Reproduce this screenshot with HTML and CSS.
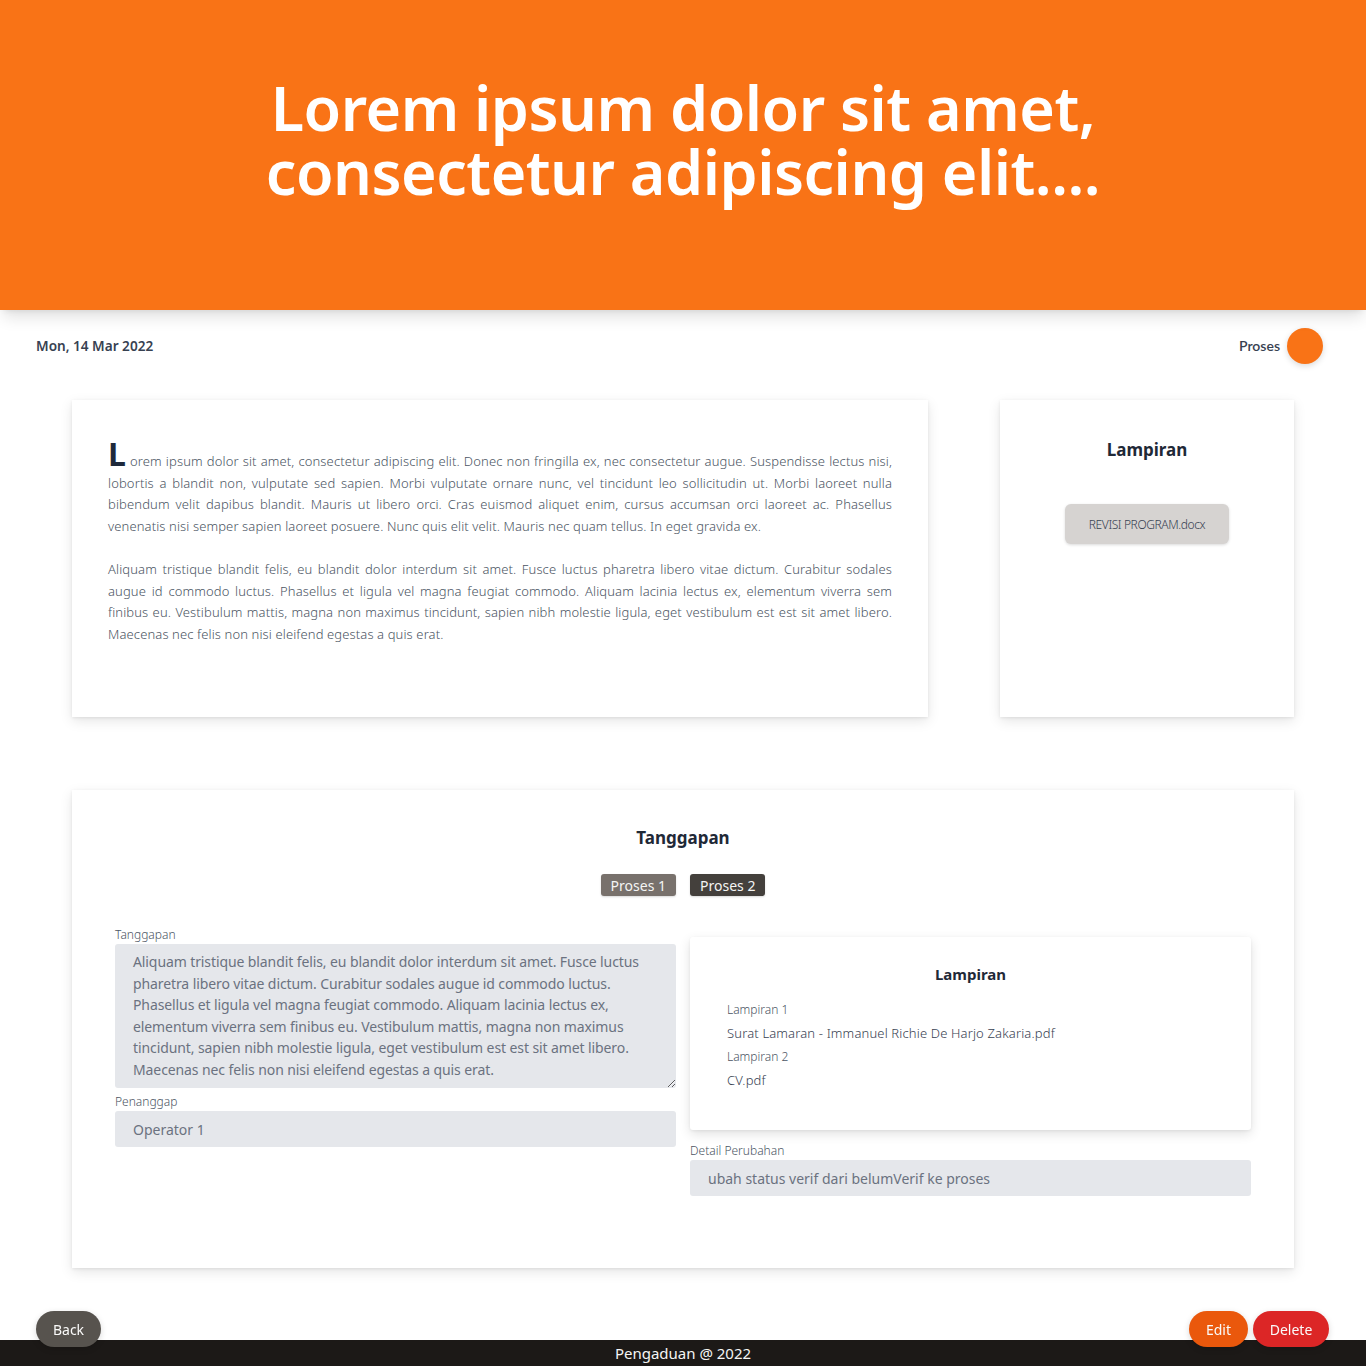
FILE: index.html
```html
<!DOCTYPE html>
<html lang="id">
<head>
<meta charset="utf-8">
<title>Pengaduan</title>
<link rel="stylesheet" href="styles.css">
</head>
<body>
<header class="hero">
  <h1 class="hero-title"><span class="hero-line">Lorem ipsum dolor sit amet,</span><span class="hero-line">consectetur adipiscing elit....</span></h1>
</header>

<div class="meta-row">
  <span class="date">Mon, 14 Mar 2022</span>
  <div class="status">
    <span class="status-text">Proses</span>
    <span class="status-dot"></span>
  </div>
</div>

<main class="content">
  <section class="top-grid">
    <article class="card body-card">
      <p class="body-text drop">Lorem ipsum dolor sit amet, consectetur adipiscing elit. Donec non fringilla ex, nec consectetur augue. Suspendisse lectus nisi, lobortis a blandit non, vulputate sed sapien. Morbi vulputate ornare nunc, vel tincidunt leo sollicitudin ut. Morbi laoreet nulla bibendum velit dapibus blandit. Mauris ut libero orci. Cras euismod aliquet enim, cursus accumsan orci laoreet ac. Phasellus venenatis nisi semper sapien laoreet posuere. Nunc quis elit velit. Mauris nec quam tellus. In eget gravida ex.</p>
      <p class="body-text">Aliquam tristique blandit felis, eu blandit dolor interdum sit amet. Fusce luctus pharetra libero vitae dictum. Curabitur sodales augue id commodo luctus. Phasellus et ligula vel magna feugiat commodo. Aliquam lacinia lectus ex, elementum viverra sem finibus eu. Vestibulum mattis, magna non maximus tincidunt, sapien nibh molestie ligula, eget vestibulum est est sit amet libero. Maecenas nec felis non nisi eleifend egestas a quis erat.</p>
    </article>
    <aside class="card attach-card">
      <h2 class="card-title">Lampiran</h2>
      <button class="file-btn">REVISI PROGRAM.docx</button>
    </aside>
  </section>

  <section class="card reply-card">
    <h2 class="card-title">Tanggapan</h2>
    <div class="tabs">
      <button class="tab tab-light">Proses 1</button>
      <button class="tab tab-dark">Proses 2</button>
    </div>
    <div class="reply-grid">
      <div class="col">
        <label class="field-label">Tanggapan</label>
        <textarea class="field field-area" readonly>Aliquam tristique blandit felis, eu blandit dolor interdum sit amet. Fusce luctus pharetra libero vitae dictum. Curabitur sodales augue id commodo luctus. Phasellus et ligula vel magna feugiat commodo. Aliquam lacinia lectus ex, elementum viverra sem finibus eu. Vestibulum mattis, magna non maximus tincidunt, sapien nibh molestie ligula, eget vestibulum est est sit amet libero. Maecenas nec felis non nisi eleifend egestas a quis erat.</textarea>
        <label class="field-label">Penanggap</label>
        <div class="field field-input">Operator 1</div>
      </div>
      <div class="col">
        <div class="sub-card">
          <h3 class="sub-title">Lampiran</h3>
          <div class="sub-label">Lampiran 1</div>
          <div class="sub-file">Surat Lamaran - Immanuel Richie De Harjo Zakaria.pdf</div>
          <div class="sub-label">Lampiran 2</div>
          <div class="sub-file">CV.pdf</div>
        </div>
        <label class="field-label">Detail Perubahan</label>
        <div class="field field-input">ubah status verif dari belumVerif ke proses</div>
      </div>
    </div>
  </section>
</main>

<div class="actions">
  <button class="pill pill-back">Back</button>
  <div class="actions-right">
    <button class="pill pill-edit">Edit</button>
    <button class="pill pill-delete">Delete</button>
  </div>
</div>

<footer class="footer">Pengaduan @ 2022</footer>
</body>
</html>
```

FILE: styles.css
```css
* { box-sizing: border-box; }
html, body { margin: 0; padding: 0; }
body {
  font-family: "Noto Sans", "Open Sans", sans-serif;
  background: #ffffff;
  color: #1f2937;
}
.hero {
  background: #f97316;
  height: 310px;
  display: flex;
  align-items: flex-start;
  justify-content: center;
  box-shadow: 0 10px 15px -3px rgba(0,0,0,0.12), 0 4px 6px -4px rgba(0,0,0,0.1);
  position: relative;
  z-index: 1;
}
.hero-title {
  margin: 76px 0 0 0;
  color: #ffffff;
  font-size: 61px;
  font-weight: 600;
  line-height: 64px;
  text-align: center;
  letter-spacing: -0.5px;
}
.hero-line { display: block; height: 64px; }
.meta-row {
  display: flex;
  justify-content: space-between;
  align-items: center;
  padding: 17px 43px 0 36px;
  height: 54px;
}
.date {
  font-size: 13.6px;
  font-weight: 600;
  color: #374151;
}
.status { display: flex; align-items: center; gap: 7px; }
.status-text { font-size: 14px; color: #374151; font-family: Lato, sans-serif; font-weight: 600; }
.status-dot {
  width: 36px; height: 36px; border-radius: 50%;
  background: #f97316;
  box-shadow: 0 2px 6px rgba(0,0,0,0.15);
}
.content { padding: 36px 72px 40px 72px; }
.card {
  background: #fff;
  box-shadow: 0 4px 12px rgba(0,0,0,0.10), 0 1px 3px rgba(0,0,0,0.08);
}
.top-grid {
  display: grid;
  grid-template-columns: 856px 294px;
  justify-content: space-between;
}
.body-card { height: 317px; padding: 43px 36px 0 36px; }
.body-text {
  margin: 0 0 22px 0;
  font-size: 13px;
  font-weight: 300;
  line-height: 21.5px;
  color: #4b5563;
  text-align: justify;
  letter-spacing: 0.12px;
}
.drop::first-letter {
  font-size: 32px;
  font-weight: 700;
  color: #1e293b;
  margin-right: 4px;
}
.attach-card {
  height: 317px;
  display: flex; flex-direction: column; align-items: center;
  padding-top: 38px;
}
.card-title {
  margin: 0;
  font-size: 17px;
  font-weight: 700;
  color: #1f2937;
}
.file-btn {
  margin-top: 43px;
  width: 164px; height: 40px;
  background: #d6d3d1;
  border: none;
  border-radius: 6px;
  font-family: inherit;
  font-size: 12px;
  font-weight: 300;
  color: #374151;
  letter-spacing: -0.4px;
  box-shadow: 0 1px 3px rgba(0,0,0,0.15);
}
.reply-card {
  margin-top: 73px;
  padding: 36px 43px 0 43px;
  height: 478px;
  display: flex; flex-direction: column; align-items: center;
}
.tabs { display: flex; gap: 14px; margin-top: 25px; }
.tab {
  height: 22px;
  padding: 0 10px;
  border: none; border-radius: 3px;
  font-family: inherit;
  font-size: 14px;
  color: #f5f5f4;
  box-shadow: 0 1px 2px rgba(0,0,0,0.15);
}
.tab-light { background: #78716c; }
.tab-dark { background: #44403c; }
.reply-grid {
  width: 100%;
  margin-top: 31px;
  display: grid;
  grid-template-columns: 1fr 1fr;
  gap: 14px;
}
.col { display: flex; flex-direction: column; }
.field-label {
  font-size: 12px;
  font-weight: 300;
  color: #4b5563;
  line-height: 16px;
  margin-bottom: 1px;
}
.field {
  background: #e5e7eb;
  border: none;
  border-radius: 3px;
  font-family: inherit;
  font-size: 14px;
  color: #6b7280;
}
.field-area {
  height: 144px;
  resize: vertical;
  padding: 7px 18px;
  line-height: 21.5px;
  margin-bottom: 6px;
  outline: none;
  letter-spacing: -0.1px;
}
.field-input {
  height: 36px;
  padding: 0 18px;
  display: flex; align-items: center;
}
.sub-card {
  margin-top: 10px;
  height: 193px;
  background: #fff;
  border-radius: 3px;
  box-shadow: 0 4px 12px rgba(0,0,0,0.12), 0 1px 3px rgba(0,0,0,0.06);
  padding: 27px 37px 0 37px;
  margin-bottom: 13px;
}
.sub-title {
  margin: 0 0 15px 0;
  text-align: center;
  font-size: 15px;
  font-weight: 700;
  color: #1f2937;
}
.sub-label {
  font-size: 12px; font-weight: 300; color: #4b5563; line-height: 22px;
}
.sub-file {
  font-size: 13px; font-weight: 300; color: #374151; line-height: 25px;
  letter-spacing: 0.15px;
}
.actions {
  position: fixed;
  left: 36px; right: 37px; bottom: 19px;
  display: flex; justify-content: space-between;
  z-index: 3;
}
.actions-right { display: flex; gap: 5px; }
.pill {
  height: 36px;
  border: none;
  border-radius: 18px;
  font-family: inherit;
  font-size: 14px;
  color: #fafaf9;
  padding: 0;
  box-shadow: 0 2px 6px rgba(0,0,0,0.15);
}
.pill-back { background: #57534e; width: 65px; }
.pill-edit { background: #ea580c; width: 59px; }
.pill-delete { background: #dc2626; width: 76px; }
.footer {
  position: fixed;
  left: 0; right: 0; bottom: 0;
  height: 26px;
  background: #1c1917;
  color: #f5f5f4;
  font-size: 15px;
  text-align: center;
  line-height: 27px;
  z-index: 2;
}
```
